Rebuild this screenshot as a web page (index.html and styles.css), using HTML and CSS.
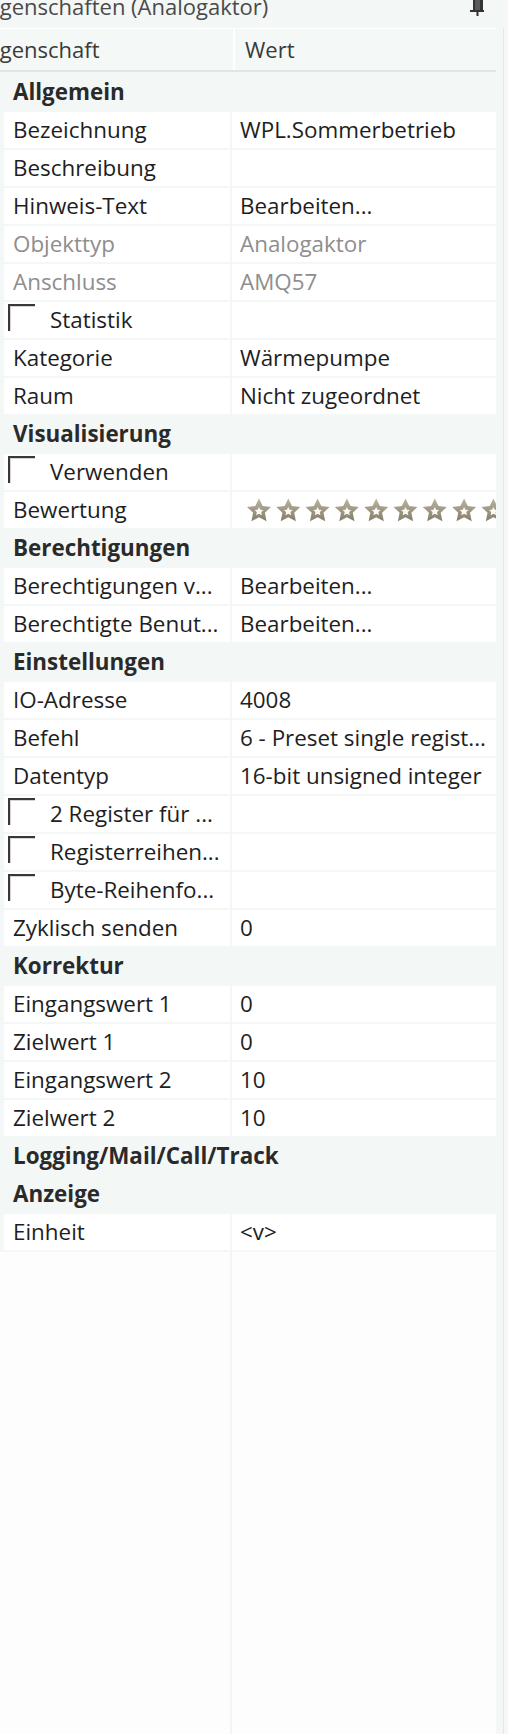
FILE: index.html
```html
<!DOCTYPE html>
<html lang="de">
<head>
<meta charset="utf-8">
<title>Eigenschaften (Analogaktor)</title>
<link rel="stylesheet" href="styles.css">
</head>
<body>
<div class="panel">
  <div class="titlebar">
    <span class="title">Eigenschaften (Analogaktor)</span>
    <svg class="pin" width="18" height="16" viewBox="0 0 18 16">
      <rect x="5" y="0" width="2" height="10" fill="#333"/>
      <rect x="12" y="0" width="3" height="10" fill="#333"/>
      <rect x="7" y="0" width="5" height="10" fill="#5a5a5a"/>
      <rect x="2" y="10" width="14" height="2" fill="#333"/>
      <rect x="8.5" y="12" width="2" height="4" fill="#333"/>
    </svg>
  </div>
  <div class="body">
    <div class="grid">
      <div class="header">
        <div class="hcell hname"><span class="clip">Eigenschaft</span></div>
        <div class="hcell hval">Wert</div>
      </div>

      <div class="cat">Allgemein</div>
      <div class="row"><div class="name">Bezeichnung</div><div class="val">WPL.Sommerbetrieb</div></div>
      <div class="row"><div class="name">Beschreibung</div><div class="val"></div></div>
      <div class="row"><div class="name">Hinweis-Text</div><div class="val">Bearbeiten...</div></div>
      <div class="row dis"><div class="name">Objekttyp</div><div class="val">Analogaktor</div></div>
      <div class="row dis"><div class="name">Anschluss</div><div class="val">AMQ57</div></div>
      <div class="row"><div class="name cbname"><span class="cb"></span>Statistik</div><div class="val"></div></div>
      <div class="row"><div class="name">Kategorie</div><div class="val">Wärmepumpe</div></div>
      <div class="row"><div class="name">Raum</div><div class="val">Nicht zugeordnet</div></div>

      <div class="cat">Visualisierung</div>
      <div class="row"><div class="name cbname"><span class="cb"></span>Verwenden</div><div class="val"></div></div>
      <div class="row"><div class="name">Bewertung</div><div class="val">
        <svg class="stars" width="300" height="24" viewBox="0 0 300 24">
          <defs>
            <linearGradient id="sg" x1="0" y1="0" x2="0" y2="1">
              <stop offset="0" stop-color="#bab4a0"/>
              <stop offset="1" stop-color="#857e69"/>
            </linearGradient>
            <g id="star">
              <polygon points="12,0.5 15.7,8 24,8.9 17.9,14.8 19.6,23.3 12,19.2 4.4,23.3 6.1,14.8 0,8.9 8.3,8" fill="url(#sg)"/>
              <polygon points="12,9 13.4,11.7 16.4,12 14.2,14.1 14.8,17.2 12,15.7 9.2,17.2 9.8,14.1 7.6,12 10.6,11.7" fill="#fbfaf6"/>
            </g>
          </defs>
          <use href="#star" x="0"/>
          <use href="#star" x="29.3"/>
          <use href="#star" x="58.6"/>
          <use href="#star" x="87.9"/>
          <use href="#star" x="117.2"/>
          <use href="#star" x="146.5"/>
          <use href="#star" x="175.8"/>
          <use href="#star" x="205.1"/>
          <use href="#star" x="234.4"/>
          <use href="#star" x="263.7"/>
        </svg>
      </div></div>

      <div class="cat">Berechtigungen</div>
      <div class="row"><div class="name">Berechtigungen v...</div><div class="val">Bearbeiten...</div></div>
      <div class="row"><div class="name">Berechtigte Benut...</div><div class="val">Bearbeiten...</div></div>

      <div class="cat">Einstellungen</div>
      <div class="row"><div class="name">IO-Adresse</div><div class="val">4008</div></div>
      <div class="row"><div class="name">Befehl</div><div class="val">6 - Preset single regist...</div></div>
      <div class="row"><div class="name">Datentyp</div><div class="val">16-bit unsigned integer</div></div>
      <div class="row"><div class="name cbname"><span class="cb"></span>2 Register für ...</div><div class="val"></div></div>
      <div class="row"><div class="name cbname"><span class="cb"></span>Registerreihen...</div><div class="val"></div></div>
      <div class="row"><div class="name cbname"><span class="cb"></span>Byte-Reihenfo...</div><div class="val"></div></div>
      <div class="row"><div class="name">Zyklisch senden</div><div class="val">0</div></div>

      <div class="cat">Korrektur</div>
      <div class="row"><div class="name">Eingangswert 1</div><div class="val">0</div></div>
      <div class="row"><div class="name">Zielwert 1</div><div class="val">0</div></div>
      <div class="row"><div class="name">Eingangswert 2</div><div class="val">10</div></div>
      <div class="row"><div class="name">Zielwert 2</div><div class="val">10</div></div>

      <div class="cat">Logging/Mail/Call/Track</div>
      <div class="cat">Anzeige</div>
      <div class="row"><div class="name">Einheit</div><div class="val">&lt;v&gt;</div></div>

      <div class="filler"><div class="fcell"></div><div class="fcell"></div></div>
    </div>
    <div class="scroll"></div>
  </div>
</div>
</body>
</html>
```

FILE: styles.css
```css
html, body {
  margin: 0;
  padding: 0;
}

body {
  width: 508px;
  height: 1734px;
  overflow: hidden;
  background: #f3f7f5;
  font-family: "Open Sans", "Noto Sans", sans-serif;
  font-size: 22.4px;
  color: #1e1e1e;
}

.panel {
  display: flex;
  flex-direction: column;
  height: 1734px;
}

.titlebar {
  height: 28px;
  flex: none;
  display: flex;
  justify-content: space-between;
  align-items: flex-start;
  overflow: hidden;
  background: #f3f7f5;
}

.title {
  margin-left: -18px;
  font-size: 22px;
  line-height: 13px;
  color: #4a4a4a;
  white-space: nowrap;
}

.pin {
  display: block;
  margin-right: 22px;
}

.body {
  flex: 1;
  display: flex;
  min-height: 0;
}

.grid {
  width: 496px;
  flex: none;
  display: flex;
  flex-direction: column;
}

.scroll {
  flex: 1;
  background: linear-gradient(to right, #f3f7f5 0, #f3f7f5 7px, #e3e7e5 7px, #e3e7e5 8px, #f5f8f6 8px);
}

/* header */
.header {
  flex: none;
  height: 41px;
  padding-top: 1px;
  border-bottom: 2px solid #e1e5e3;
  background: #ffffff;
  display: grid;
  grid-template-columns: 233px 1fr;
  column-gap: 2px;
}

.hcell {
  background: #f4f8f6;
  color: #3a3a3a;
  font-size: 22px;
  line-height: 30px;
  padding-top: 5px;
  white-space: nowrap;
  overflow: hidden;
}

.clip {
  margin-left: -18px;
}

.hval {
  padding-left: 10px;
}

/* category rows */
.cat {
  flex: none;
  height: 34px;
  margin-top: 2px;
  padding: 0 0 2px 13px;
  display: flex;
  align-items: center;
  font-weight: 700;
  color: #2a2a2a;
  white-space: nowrap;
}

/* property rows */
.row {
  flex: none;
  height: 36px;
  margin: 2px 0 0 4px;
  display: grid;
  grid-template-columns: 226px 264px;
  column-gap: 2px;
}

.name, .val {
  background: #ffffff;
  height: 34px;
  padding-bottom: 2px;
  display: flex;
  align-items: center;
  white-space: nowrap;
  overflow: hidden;
}

.name {
  padding-left: 9px;
}

.val {
  padding-left: 8px;
}

.dis .name, .dis .val {
  color: #8e8e8e;
}

.cbname {
  padding-left: 4px;
}

.cb {
  align-self: flex-start;
  flex: none;
  width: 25px;
  height: 25px;
  margin-top: 2px;
  margin-right: 15px;
  border-top: 2px solid #383838;
  border-left: 2px solid #383838;
  box-shadow: inset 1px 1px 0 #d4d4d4;
  background: #ffffff;
}

.stars {
  display: block;
  flex: none;
  margin-left: 7px;
  margin-top: 2px;
}

/* empty area */
.filler {
  flex: 1;
  margin-top: 2px;
  display: grid;
  grid-template-columns: 230px 264px;
  column-gap: 2px;
  background: #f2f5f3;
}

.fcell {
  background: #fdfdfd;
}
```
